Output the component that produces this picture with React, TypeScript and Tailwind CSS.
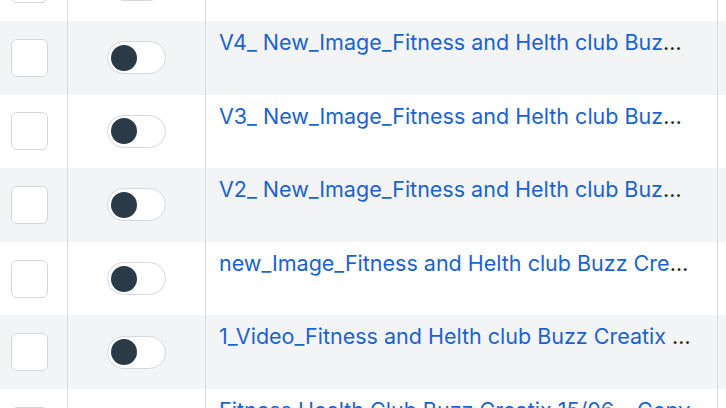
import React from "react";

const rows = [
  { text: "Fitness and Helth club Buzz Creatix top row", grey: false },
  { text: "V4_ New_Image_Fitness and Helth club Buzz Creatix", grey: true },
  { text: "V3_ New_Image_Fitness and Helth club Buzz Creatix", grey: false },
  { text: "V2_ New_Image_Fitness and Helth club Buzz Creatix", grey: true },
  { text: "new_Image_Fitness and Helth club Buzz Creatix", grey: false },
  { text: "1_Video_Fitness and Helth club Buzz Creatix 15/06", grey: true },
  { text: "Fitness Health Club Buzz Creatix 15/06 – Copy", grey: false },
];

function Row({ text, grey }: { text: string; grey: boolean }) {
  return (
    <div className={`flex h-[73.6px] ${grey ? "bg-[#f3f4f6]" : "bg-white"}`}>
      <div className="w-[68px] shrink-0 border-r border-[#d9d9d9] flex items-center">
        <div className="ml-[11px] w-[37px] h-[38px] rounded-[6px] border border-[#d4d7dc] bg-white" />
      </div>
      <div className="w-[138px] shrink-0 border-r border-[#d9d9d9] flex items-center justify-center">
        <div className="w-[59px] h-[33px] rounded-full border border-[#d4d7dc] bg-white flex items-center pl-[3px]">
          <div className="w-[26px] h-[26px] rounded-full bg-[#2a3a47]" />
        </div>
      </div>
      <div className="w-[512px] shrink-0 border-r border-[#d9d9d9] pl-[13px] pr-[25px] pt-[7px]">
        <div className="truncate text-[21.5px] leading-[28px] text-[#222]">
          <a className="text-[#1b62d0]">{text}</a>
        </div>
      </div>
      <div className="flex-1" />
    </div>
  );
}

export default function App() {
  return (
    <div
      className="w-[726px] h-[408px] overflow-hidden bg-white"
      style={{ fontFamily: "Inter, 'Noto Sans', sans-serif" }}
    >
      <div className="-mt-[52.6px]">
        {rows.map((r, i) => (
          <Row key={i} text={r.text} grey={r.grey} />
        ))}
      </div>
    </div>
  );
}
